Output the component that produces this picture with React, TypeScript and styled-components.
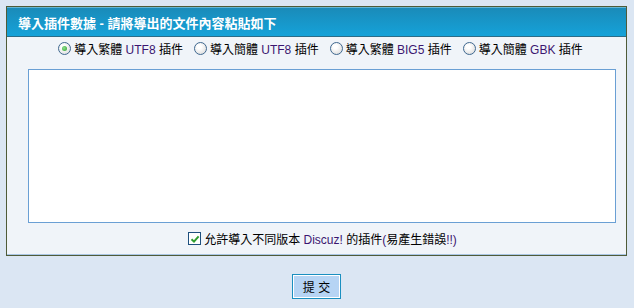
import { useState } from "react";
import styled, { createGlobalStyle } from "styled-components";

const GlobalStyle = createGlobalStyle`
  html, body {
    margin: 0;
    padding: 0;
    background: #dbe6f3;
  }
  body {
    font-family: "Liberation Sans", "Noto Sans CJK TC", sans-serif;
    font-size: 12px;
    color: #000;
  }
`;

const encodings = [
  { id: "utf8_tc", pre: "導入繁體", code: "UTF8" },
  { id: "utf8_sc", pre: "導入簡體", code: "UTF8" },
  { id: "big5", pre: "導入繁體", code: "BIG5" },
  { id: "gbk", pre: "導入簡體", code: "GBK" },
];

const App = () => {
  const [charset, setCharset] = useState("utf8_tc");
  const [data, setData] = useState("");
  const [ignoreVersion, setIgnoreVersion] = useState(true);

  return (
    <St.Page>
      <GlobalStyle />
      <St.Panel>
        <St.Header>導入插件數據 - 請將導出的文件內容粘貼如下</St.Header>
        <St.RadioRow>
          {encodings.map((e) => (
            <St.Option key={e.id} onClick={() => setCharset(e.id)}>
              <St.Radio $checked={charset === e.id} />
              <span>
                {e.pre} <St.Latin>{e.code}</St.Latin> 插件
              </span>
            </St.Option>
          ))}
        </St.RadioRow>
        <St.AreaRow>
          <St.TextArea value={data} onChange={(ev) => setData(ev.target.value)} />
        </St.AreaRow>
        <St.CheckRow>
          <St.Option onClick={() => setIgnoreVersion(!ignoreVersion)}>
            <St.Check>
              {ignoreVersion && (
                <svg width="10" height="10" viewBox="0 0 10 10">
                  <path d="M1.5 5.2 L4 7.6 L8.6 2.4" fill="none" stroke="#2f9e2f" strokeWidth="2" />
                </svg>
              )}
            </St.Check>
            <span>
              允許導入不同版本 <St.Latin>Discuz!</St.Latin> 的插件<St.Latin>(</St.Latin>易產生錯誤
              <St.Latin>!!)</St.Latin>
            </span>
          </St.Option>
        </St.CheckRow>
      </St.Panel>
      <St.Footer>
        <St.Submit type="button">提 交</St.Submit>
      </St.Footer>
    </St.Page>
  );
};

export default App;

const St = {
  Page: styled.div`
    padding: 6px;
    width: 621px;
  `,
  Panel: styled.div`
    border: 1px solid #4f5b38;
    background: #f0f4f9;
  `,
  Header: styled.div`
    height: 29px;
    padding-left: 11px;
    display: flex;
    align-items: center;
    border-top: 1px solid #62b6d6;
    border-bottom: 1px solid #2b6c88;
    background: linear-gradient(#1a8bb9, #15a2d9);
    color: #fff;
    font-weight: bold;
    font-size: 13px;
    box-sizing: border-box;
    height: 30px;
  `,
  RadioRow: styled.div`
    display: flex;
    justify-content: center;
    align-items: center;
    gap: 11px;
    height: 22px;
    padding-left: 8px;
  `,
  Option: styled.label`
    display: flex;
    align-items: center;
    gap: 3px;
    cursor: pointer;
    white-space: pre;
  `,
  Radio: styled.span<{ $checked: boolean }>`
    position: relative;
    width: 11px;
    height: 11px;
    border-radius: 50%;
    border: 1px solid #3f6890;
    background: radial-gradient(circle at 40% 35%, #ffffff 20%, #d4d4d4 100%);
    &::after {
      content: "";
      display: ${(p) => (p.$checked ? "block" : "none")};
      position: absolute;
      left: 3px;
      top: 3px;
      width: 5px;
      height: 5px;
      border-radius: 50%;
      background: radial-gradient(circle at 40% 40%, #8ee08e, #2e9e2e);
    }
  `,
  Latin: styled.span`
    color: #3b1670;
  `,
  AreaRow: styled.div`
    padding: 10px 9px 0 21px;
  `,
  TextArea: styled.textarea`
    display: block;
    box-sizing: border-box;
    width: 588px;
    height: 154px;
    margin: 0;
    border: 1px solid #6a9fd4;
    background: #fff;
    resize: none;
    font-family: inherit;
    font-size: 12px;
    &:focus {
      outline: none;
    }
  `,
  CheckRow: styled.div`
    display: flex;
    justify-content: center;
    align-items: center;
    height: 31px;
    padding-left: 12px;
    border-bottom: 1px solid #a9c6e4;
  `,
  Check: styled.span`
    display: flex;
    align-items: center;
    justify-content: center;
    width: 11px;
    height: 11px;
    border: 1px solid #1e4f7e;
    background: #fff;
  `,
  Footer: styled.div`
    display: flex;
    justify-content: center;
    padding-top: 18px;
  `,
  Submit: styled.button`
    width: 49px;
    height: 25px;
    padding: 0;
    border: 1px solid #1a8fc0;
    box-shadow: inset 0 0 0 1px #fff;
    background: #b6d4f4;
    color: #000;
    font-family: "Liberation Sans", "Noto Sans CJK TC", sans-serif;
    font-size: 12px;
    cursor: pointer;
  `,
};
